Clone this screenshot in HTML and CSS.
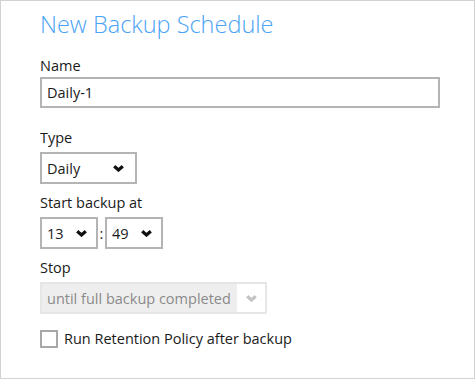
FILE: index.html
```html
<!DOCTYPE html>
<html lang="en">
<head>
  <meta charset="UTF-8">
  <title>New Backup Schedule</title>
  <link rel="stylesheet" href="styles.css">
</head>
<body>

  <div class="panel">
    <h1 class="title">New Backup Schedule</h1>

    <div class="field field-name">
      <label for="name">Name</label>
      <input type="text" id="name" class="text-input" value="Daily-1">
    </div>

    <div class="field">
      <label>Type</label>
      <div class="select select-type">
        <span>Daily</span>
        <svg class="chevron" width="11" height="7" viewBox="0 0 11 7"><path d="M1.2 1.2 L5.5 5 L9.8 1.2" /></svg>
      </div>
    </div>

    <div class="field">
      <label>Start backup at</label>
      <div class="time-row">
        <div class="select select-time">
          <span>13</span>
          <svg class="chevron" width="11" height="7" viewBox="0 0 11 7"><path d="M1.2 1.2 L5.5 5 L9.8 1.2" /></svg>
        </div>
        <span class="colon">:</span>
        <div class="select select-time">
          <span>49</span>
          <svg class="chevron" width="11" height="7" viewBox="0 0 11 7"><path d="M1.2 1.2 L5.5 5 L9.8 1.2" /></svg>
        </div>
      </div>
    </div>

    <div class="field">
      <label>Stop</label>
      <div class="select select-disabled">
        <span>until full backup completed</span>
        <div class="arrow-box">
          <svg class="chevron" width="11" height="7" viewBox="0 0 11 7"><path d="M1.2 1.2 L5.5 5 L9.8 1.2" /></svg>
        </div>
      </div>
    </div>

    <label class="check-row">
      <span class="checkbox"></span>
      <span>Run Retention Policy after backup</span>
    </label>
  </div>

</body>
</html>
```

FILE: styles.css
```css
body {
  margin: 0;
  background-color: #ffffff;
  font-family: "Open Sans", "Noto Sans", sans-serif;
  color: #1a1a1a;
}

.panel {
  width: 475px;
  height: 379px;
  box-sizing: border-box;
  border: 1px solid #d2d2d2;
  padding: 7px 0 0 39px;
}

.title {
  margin: 0;
  font-size: 23.5px;
  font-weight: 300;
  line-height: 32px;
  color: #4aa3f7;
}

.field {
  margin-top: 9px;
}

.field-name {
  margin-top: 16px;
  margin-bottom: 20px;
}

label {
  display: block;
  font-size: 14.5px;
  line-height: 19px;
  margin-bottom: 5px;
}

.field-name label {
  margin-bottom: 2px;
}

.text-input {
  display: block;
  width: 400px;
  height: 31px;
  box-sizing: border-box;
  border: 2px solid #b4b4b4;
  padding: 0 5px;
  font-family: inherit;
  font-size: 14.5px;
  color: #1a1a1a;
  outline: none;
}

.select {
  display: flex;
  align-items: center;
  justify-content: space-between;
  height: 32px;
  box-sizing: border-box;
  border: 2px solid #b4b4b4;
  padding: 0 11px 0 5px;
  font-size: 14.5px;
}

.select-type {
  width: 97px;
}

.time-row {
  display: flex;
  align-items: center;
}

.select-time {
  width: 58px;
  padding-right: 9px;
}

.colon {
  width: 7px;
  text-align: center;
  font-size: 14.5px;
}

.chevron path {
  fill: none;
  stroke: #111111;
  stroke-width: 3.2;
}

.select-disabled {
  width: 227px;
  padding: 0 0 0 5px;
  border-color: #e6e6e6;
  background-color: #eeeeee;
  color: #8a8a8a;
}

.arrow-box {
  display: flex;
  align-items: center;
  justify-content: center;
  align-self: stretch;
  width: 28px;
  background-color: #ffffff;
}

.select-disabled .chevron path {
  stroke: #c4c4c4;
}

.check-row {
  display: flex;
  align-items: center;
  gap: 6px;
  margin-top: 15px;
  font-size: 14.5px;
  line-height: 19px;
}

.checkbox {
  width: 18px;
  height: 18px;
  box-sizing: border-box;
  border: 2px solid #a8a8a8;
  background-color: #ffffff;
}
```
